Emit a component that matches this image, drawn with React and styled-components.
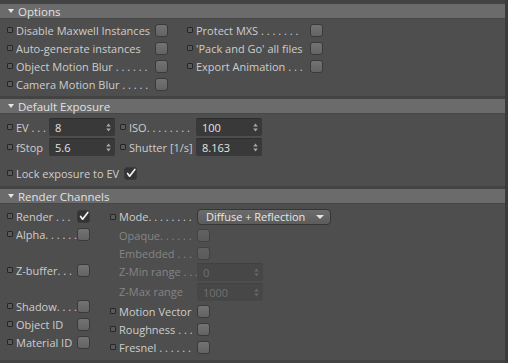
import React from "react";
import styled, { createGlobalStyle, css } from "styled-components";

const GlobalStyle = createGlobalStyle`
  html, body {
    margin: 0;
    padding: 0;
    background: #434343;
  }
  body {
    font-family: "Open Sans", "Liberation Sans", sans-serif;
    font-size: 11px;
    color: #cdcdcd;
  }
`;

const Page = styled.div`
  width: 508px;
  height: 363px;
  display: flex;
  overflow: hidden;
  background: #434343;
`;

const Panel = styled.div`
  width: 505px;
  padding: 4px 0 3px;
  box-sizing: border-box;
  display: flex;
  flex-direction: column;
  gap: 3px;
`;

const Edge = styled.div`
  width: 3px;
  background: #3b3b3b;
`;

const Section = styled.section`
  display: flex;
  flex-direction: column;
  flex: ${(p) => (p.$grow ? 1 : "none")};
`;

const Header = styled.div`
  height: 14px;
  background: #6b6b6b;
  display: flex;
  align-items: center;
  gap: 4px;
  padding-left: 8px;
  color: #e2e2e2;
  font-size: 11.5px;
  border-bottom: 1px solid #474747;
`;

const Arrow = styled.span`
  width: 0;
  height: 0;
  border-left: 3.5px solid transparent;
  border-right: 3.5px solid transparent;
  border-top: 4px solid #e6e6e6;
`;

const Body = styled.div`
  background: #4e4e4e;
  padding: ${(p) => p.$pad || "3px 0 3px 7px"};
  display: flex;
  flex: 1;
  flex-direction: ${(p) => p.$dir || "row"};
`;

const Columns = styled.div`
  display: flex;
`;

const Column = styled.div`
  display: flex;
  flex-direction: column;
  width: ${(p) => (p.$w ? `${p.$w}px` : "auto")};
`;

const Row = styled.div`
  display: flex;
  align-items: center;
  height: ${(p) => p.$h || 18}px;
`;

const Spacer = styled.div`
  height: ${(p) => p.$h}px;
`;

const Marker = styled.span`
  width: 4px;
  height: 4px;
  border: 1px solid #262626;
  background: #5a5a5a;
  border-radius: 1px;
  margin-right: 3px;
  flex-shrink: 0;
  visibility: ${(p) => (p.$hidden ? "hidden" : "visible")};
`;

const Label = styled.span`
  width: ${(p) => p.$w}px;
  flex-shrink: 0;
  white-space: nowrap;
  overflow: hidden;
  color: ${(p) => (p.$disabled ? "#858585" : "#cdcdcd")};
`;

const Box = styled.span`
  width: 11px;
  height: 11px;
  border-radius: 3px;
  border: 1px solid #3a3a3a;
  display: flex;
  align-items: center;
  justify-content: center;
  flex-shrink: 0;
  ${(p) =>
    p.$checked
      ? css`
          background: #343434;
        `
      : p.$disabled
      ? css`
          background: linear-gradient(#626262, #5a5a5a);
          border-color: #424242;
        `
      : css`
          background: linear-gradient(#737373, #636363);
        `}
`;

const Field = styled.div`
  width: 66px;
  height: 18px;
  box-sizing: border-box;
  border-radius: 2px;
  display: flex;
  align-items: center;
  justify-content: space-between;
  padding: 0 4px 0 6px;
  background: ${(p) => (p.$disabled ? "#474747" : "#393939")};
  border-top: 1px solid ${(p) => (p.$disabled ? "#414141" : "#2e2e2e")};
  color: ${(p) => (p.$disabled ? "#707070" : "#e4e4e4")};
  flex-shrink: 0;
`;

const Select = styled.div`
  width: 134px;
  height: 16px;
  box-sizing: border-box;
  border-radius: 4px;
  border: 1px solid #363636;
  background: linear-gradient(#6c6c6c, #5c5c5c);
  display: flex;
  align-items: center;
  justify-content: space-between;
  padding: 0 6px 0 8px;
  color: #e8e8e8;
  flex-shrink: 0;
`;

const Caret = styled.span`
  width: 0;
  height: 0;
  border-left: 4px solid transparent;
  border-right: 4px solid transparent;
  border-top: 4px solid #e4e4e4;
`;

const Check = () => (
  <svg width="10" height="10" viewBox="0 0 10 10">
    <path
      d="M1.6 5.4 L3.6 8.2 L8.8 1.4"
      fill="none"
      stroke="#f2f2f2"
      strokeWidth="1.7"
      strokeLinecap="round"
      strokeLinejoin="round"
    />
  </svg>
);

const Spin = ({ dim }) => (
  <svg width="5" height="9" viewBox="0 0 5 9">
    <path
      d="M2.5 0.5 L4.8 3.5 L0.2 3.5 Z M2.5 8.5 L4.8 5.5 L0.2 5.5 Z"
      fill={dim ? "#666" : "#a8a8a8"}
    />
  </svg>
);

const CheckRow = ({ label, w, checked, disabled, h }) => (
  <Row $h={h}>
    <Marker $hidden={disabled} />
    <Label $w={w} $disabled={disabled}>
      {label}
    </Label>
    <Box $checked={checked} $disabled={disabled}>
      {checked && <Check />}
    </Box>
  </Row>
);

const FieldRow = ({ label, w, value, disabled, h }) => (
  <Row $h={h}>
    <Marker $hidden={disabled} />
    <Label $w={w} $disabled={disabled}>
      {label}
    </Label>
    <Field $disabled={disabled}>
      <span>{value}</span>
      <Spin dim={disabled} />
    </Field>
  </Row>
);

export default function App() {
  return (
    <Page>
      <GlobalStyle />
      <Panel>
        <Section>
          <Header>
            <Arrow />
            Options
          </Header>
          <Body $pad="2px 0 3px 7px">
            <Column $w={180}>
              <CheckRow w={139} label="Disable Maxwell Instances" />
              <CheckRow w={139} label="Auto-generate instances" />
              <CheckRow w={139} label="Object Motion Blur . . . . . ." />
              <CheckRow w={139} label="Camera Motion Blur . . . . ." />
            </Column>
            <Column>
              <CheckRow w={114} label="Protect MXS . . . . . . ." />
              <CheckRow w={114} label="'Pack and Go' all files" />
              <CheckRow w={114} label="Export Animation . . ." />
            </Column>
          </Body>
        </Section>

        <Section>
          <Header>
            <Arrow />
            Default Exposure
          </Header>
          <Body $dir="column">
            <Columns>
              <Column $w={113}>
                <FieldRow h={20} w={33} label="EV . . ." value="8" />
                <FieldRow h={20} w={33} label="fStop" value="5.6" />
              </Column>
              <Column>
                <FieldRow h={20} w={67} label="ISO. . . . . . . ." value="100" />
                <FieldRow h={20} w={67} label="Shutter [1/s]" value="8.163" />
              </Column>
            </Columns>
            <Spacer $h={6} />
            <CheckRow h={20} w={108} label="Lock exposure to EV" checked />
          </Body>
        </Section>

        <Section $grow>
          <Header>
            <Arrow />
            Render Channels
          </Header>
          <Body>
            <Column $w={103}>
              <CheckRow w={61} label="Render . . ." checked />
              <CheckRow w={61} label="Alpha. . . . . ." />
              <Spacer $h={18} />
              <CheckRow w={61} label="Z-buffer. . ." />
              <Spacer $h={18} />
              <CheckRow w={61} label="Shadow. . . ." />
              <CheckRow w={61} label="Object ID" />
              <CheckRow w={61} label="Material ID" />
            </Column>
            <Column>
              <Row $h={19}>
                <Marker />
                <Label $w={78}>Mode. . . . . . . .</Label>
                <Select>
                  <span>Diffuse + Reflection</span>
                  <Caret />
                </Select>
              </Row>
              <CheckRow w={78} label="Opaque. . . . . ." disabled />
              <CheckRow w={78} label="Embedded . . ." disabled />
              <FieldRow h={19} w={78} label="Z-Min range . . ." value="0" disabled />
              <FieldRow h={21} w={78} label="Z-Max range" value="1000" disabled />
              <CheckRow w={78} label="Motion Vector" />
              <CheckRow w={78} label="Roughness . . ." />
              <CheckRow w={78} label="Fresnel . . . . . ." />
            </Column>
          </Body>
        </Section>
      </Panel>
      <Edge />
    </Page>
  );
}
